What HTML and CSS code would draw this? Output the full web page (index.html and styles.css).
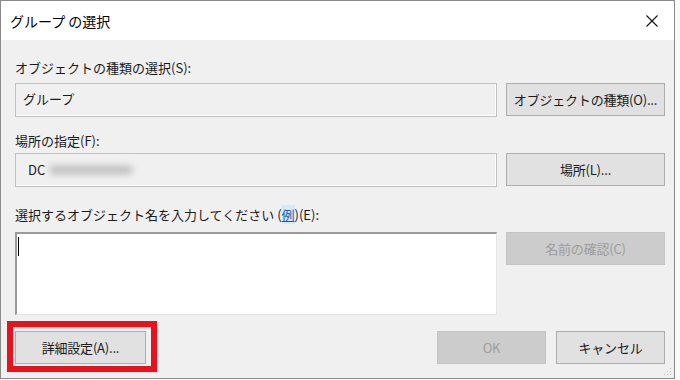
FILE: index.html
```html
<!DOCTYPE html>
<html lang="ja">

<head>
    <meta charset="UTF-8">
    <title>グループ の選択</title>
    <link rel="stylesheet" href="styles.css">
</head>

<body>
    <div class="window">
        <div class="titlebar">
            <span class="title">グループ の選択</span>
            <svg class="close" width="12" height="12" viewBox="0 0 12 12">
                <path d="M0.5 0.5 L11.5 11.5 M11.5 0.5 L0.5 11.5" stroke="#111" stroke-width="1.1" fill="none" />
            </svg>
        </div>

        <div class="content">
            <!-- object type -->
            <div class="label first">オブジェクトの種類の選択(S):</div>
            <div class="row">
                <div class="field">グループ</div>
                <button class="btn">オブジェクトの種類(O)...</button>
            </div>

            <!-- location -->
            <div class="label second">場所の指定(F):</div>
            <div class="row">
                <div class="field dc">DC<span class="blur"></span></div>
                <button class="btn">場所(L)...</button>
            </div>

            <!-- names -->
            <div class="label third">選択するオブジェクト名を入力してください (<span class="link">例</span>)(E):</div>
            <div class="row">
                <div class="names"><span class="caret"></span></div>
                <button class="btn disabled">名前の確認(C)</button>
            </div>

            <div class="footer">
                <button class="btn advanced">詳細設定(A)...</button>
                <div class="actions">
                    <button class="btn disabled small">OK</button>
                    <button class="btn small">キャンセル</button>
                </div>
            </div>
        </div>

        <svg class="grip" width="8" height="8" viewBox="0 0 8 8">
            <rect x="6" y="0" width="1" height="1" fill="#bbb" />
            <rect x="3" y="3" width="1" height="1" fill="#bbb" />
            <rect x="6" y="3" width="1" height="1" fill="#bbb" />
            <rect x="0" y="6" width="1" height="1" fill="#bbb" />
            <rect x="3" y="6" width="1" height="1" fill="#bbb" />
            <rect x="6" y="6" width="1" height="1" fill="#bbb" />
        </svg>
    </div>
</body>

</html>
```

FILE: styles.css
```css
* {
    box-sizing: border-box;
    margin: 0;
    padding: 0;
}

body {
    width: 680px;
    height: 380px;
    background: #fafafa;
    font-family: 'Noto Sans CJK JP', 'Noto Sans', sans-serif;
    font-size: 13px;
    color: #1a1a1a;
    overflow: hidden;
}

.window {
    position: relative;
    display: flex;
    flex-direction: column;
    width: 675px;
    height: 379px;
    border: 1px solid #8a8a8a;
    background: #f0f0f0;
}

.titlebar {
    display: flex;
    justify-content: space-between;
    align-items: center;
    height: 39px;
    padding: 0 16px 0 9px;
    background: #fff;
}

.title {
    font-size: 14px;
    color: #000;
}

.content {
    display: flex;
    flex-direction: column;
    padding: 0 9px 0 14px;
}

.label {
    height: 18px;
    line-height: 18px;
}

.first {
    margin-top: 19px;
    margin-bottom: 6px;
}

.second {
    margin-top: 15px;
    margin-bottom: 3px;
}

.third {
    margin-top: 19px;
    margin-bottom: 8px;
}

.link {
    color: #1a5fb4;
    text-decoration: underline;
    background: #d6e8f7;
}

.row {
    display: flex;
    align-items: flex-start;
    gap: 9px;
}

.field {
    flex: 1;
    height: 34px;
    line-height: 30px;
    padding-left: 7px;
    border: 1px solid #c2c2c2;
    box-shadow: inset -1px -1px 0 #fff;
    background: #f0f0f0;
}

.dc {
    display: flex;
    align-items: center;
    padding-left: 12px;
}

.blur {
    width: 84px;
    height: 10px;
    margin-left: 4px;
    border-radius: 5px;
    background: #c4c4c4;
    filter: blur(3px);
}

.names {
    flex: 1;
    height: 83px;
    background: #fff;
    border-top: 2px solid #9a9a9a;
    border-left: 2px solid #9a9a9a;
    border-right: 1px solid #e4e4e4;
    border-bottom: 1px solid #e4e4e4;
    padding: 3px 0 0 1px;
}

.caret {
    display: block;
    width: 1px;
    height: 19px;
    background: #000;
}

.btn {
    width: 159px;
    height: 33px;
    border: 1px solid #adadad;
    background: #e1e1e1;
    font-family: inherit;
    font-size: 13px;
    letter-spacing: -0.2px;
    color: #1a1a1a;
}

.btn.disabled {
    background: #cccccc;
    border-color: #c4c4c4;
    color: #9c9c9c;
}

.footer {
    display: flex;
    justify-content: space-between;
    margin-top: 16px;
}

.advanced {
    position: relative;
    width: 131px;
}

/* red annotation frame */
.advanced::after {
    content: "";
    position: absolute;
    top: -11px;
    left: -9px;
    right: -12px;
    bottom: -9px;
    border: 6px solid #e8121c;
}

.actions {
    display: flex;
    gap: 10px;
}

.small {
    width: 109px;
}

.grip {
    position: absolute;
    right: 2px;
    bottom: 2px;
}
```
